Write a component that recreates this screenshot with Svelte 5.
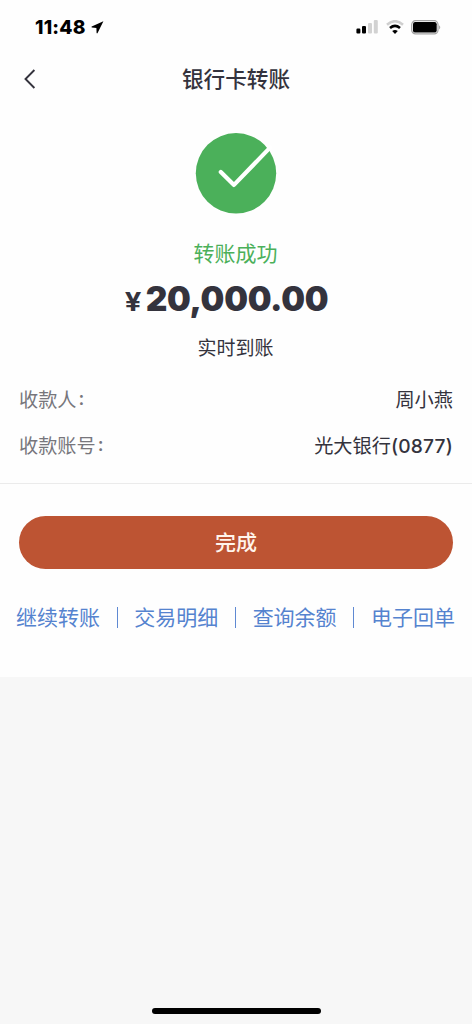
<script lang="ts">
    let payee = "周小燕";
    let bank = "光大银行";
    let cardTail = "(0877)";
    let amount = "20,000.00";

    const actions = ["继续转账", "交易明细", "查询余额", "电子回单"];
</script>

<div class="screen">
    <div class="panel">
        <div class="status-bar">
            <div class="clock">
                <span>11:48</span>
                <svg width="13" height="13" viewBox="0 0 13 13">
                    <path d="M12.4 0.3 L0.7 5.6 Q0.1 6.2 0.9 6.5 L5.4 7.1 L5.6 12 Q6 12.8 6.6 12 Z" />
                </svg>
            </div>
            <div class="indicators">
                <svg width="22" height="14" viewBox="0 0 22 14">
                    <rect x="0.4" y="8.6" width="4" height="5" rx="1.1" />
                    <rect x="6" y="6" width="4" height="7.6" rx="1.1" />
                    <rect class="dim" x="12" y="3" width="4" height="10.6" rx="1.1" />
                    <rect class="dim" x="17.8" y="0" width="4" height="13.6" rx="1.1" />
                </svg>
                <svg class="wifi" width="18" height="14" viewBox="0 0 18 14">
                    <path class="arc dim-arc" d="M1 4.7 Q9 -2.2 17 4.7" />
                    <path class="arc" d="M4 8 Q9 3.8 14 8" />
                    <path d="M9 14 L6.2 11.1 Q9 8.7 11.8 11.1 Z" />
                </svg>
                <svg class="battery" width="31" height="15" viewBox="0 0 31 15">
                    <rect class="shell" x="0.7" y="0.7" width="26.3" height="13.2" rx="3.8" />
                    <rect x="2" y="2" width="23.7" height="10.6" rx="2.2" />
                    <path class="tip" d="M28.1 5.2 Q30.4 7.3 28.1 9.4 Z" />
                </svg>
            </div>
        </div>

        <header class="nav">
            <button class="back" aria-label="返回">
                <svg width="12" height="20" viewBox="0 0 12 20">
                    <path d="M10.4 1 L1.5 10 L10.4 19" />
                </svg>
            </button>
            <h1>银行卡转账</h1>
        </header>

        <section class="result">
            <svg width="82" height="81" viewBox="0 0 82 81">
                <circle cx="41" cy="40.3" r="40.2" />
                <path d="M25.8 38.9 L39 51.9 L75 14.6" />
            </svg>
            <p class="result-text">转账成功</p>
            <p class="amount"><span class="currency">¥</span>{amount}</p>
            <p class="timing">实时到账</p>
        </section>

        <section class="details">
            <div class="row">
                <span class="label">收款人<i>:</i></span>
                <span>{payee}</span>
            </div>
            <div class="row">
                <span class="label">收款账号<i>:</i></span>
                <span>{bank}<b>{cardTail}</b></span>
            </div>
        </section>

        <button class="done-btn">完成</button>

        <nav class="actions">
            {#each actions as action, i}
                {#if i > 0}
                    <span class="separator"></span>
                {/if}
                <a href="#{i}">{action}</a>
            {/each}
        </nav>
    </div>

    <div class="home-bar"></div>
</div>

<style>
    :global(body) {
        margin: 0;
    }

    .screen {
        box-sizing: border-box;
        height: 1024px;
        padding-bottom: 10px;
        display: flex;
        flex-direction: column;
        justify-content: space-between;
        align-items: center;
        background: #f7f7f7;
        color: #34333d;
        font-family: Inter, "Noto Sans CJK SC", sans-serif;
    }

    .panel {
        box-sizing: border-box;
        width: 100%;
        height: 677px;
        background: #fefefe;
    }

    svg {
        display: block;
    }

    p, h1 {
        margin: 0;
    }

    button {
        border: none;
        padding: 0;
        font-family: inherit;
        cursor: pointer;
    }

    .status-bar {
        height: 54px;
        box-sizing: border-box;
        padding: 0 30px 0 35px;
        display: flex;
        justify-content: space-between;
        align-items: center;
        color: #000;
    }

    .clock {
        display: flex;
        align-items: center;
        gap: 5px;
        font-size: 19.2px;
        font-weight: 800;
        letter-spacing: 0.2px;
    }

    .indicators {
        display: flex;
        align-items: center;
    }

    .wifi {
        margin: 0 7px 0 8px;
    }

    .dim {
        fill: #d2d2d2;
    }

    .arc {
        fill: none;
        stroke: #000;
        stroke-width: 2.6;
    }

    .dim-arc {
        stroke: #cfcfcf;
    }

    .shell {
        fill: none;
        stroke: #a2a2a2;
        stroke-width: 1.2;
    }

    .tip {
        fill: #a2a2a2;
    }

    .nav {
        height: 50px;
        display: grid;
        grid-template-columns: 60px 1fr 60px;
        align-items: center;
    }

    .back {
        width: 60px;
        height: 50px;
        padding-left: 24px;
        background: none;
    }

    .back path {
        fill: none;
        stroke: #34333d;
        stroke-width: 1.9;
    }

    h1 {
        text-align: center;
        font-size: 21.6px;
        line-height: 50px;
        font-weight: 500;
    }

    .result {
        padding-top: 29px;
        display: flex;
        flex-direction: column;
        align-items: center;
    }

    .result circle {
        fill: #4bb05a;
    }

    .result path {
        fill: none;
        stroke: #fff;
        stroke-width: 4.2;
        stroke-linecap: round;
        stroke-linejoin: round;
    }

    .result-text {
        margin-top: 25px;
        padding-right: 1px;
        font-size: 21px;
        line-height: 30px;
        color: #4bb05a;
    }

    .amount {
        padding-right: 18px;
        font-size: 33.5px;
        line-height: 60px;
        font-weight: 900;
        letter-spacing: -0.3px;
    }

    .currency {
        display: inline-block;
        margin-right: 6px;
        font-size: 25px;
        line-height: 1;
        font-weight: 700;
        transform: scaleX(1.17);
    }

    .timing {
        padding-right: 1px;
        font-size: 19px;
        line-height: 40px;
    }

    .details {
        padding: 8px 19px 14px;
        border-bottom: 1px solid #ebebeb;
    }

    .row {
        display: flex;
        justify-content: space-between;
        font-size: 19.2px;
        line-height: 46px;
    }

    .row b {
        font-weight: 500;
        letter-spacing: 0.2px;
    }

    .label {
        color: #77767c;
    }

    .label i {
        position: relative;
        top: -2px;
        margin-left: 2px;
        font-style: normal;
        font-weight: 500;
    }

    .done-btn {
        display: block;
        width: 434px;
        height: 53px;
        margin: 32px auto 0;
        padding-bottom: 4px;
        border-radius: 27px;
        background: #bd5433;
        color: #fff5ec;
        font-size: 21px;
        font-weight: 500;
    }

    .actions {
        padding: 33px 17px 0 16px;
        display: flex;
        justify-content: space-between;
        align-items: center;
        line-height: 31px;
    }

    .actions a {
        color: #5583cf;
        font-size: 21px;
        text-decoration: none;
    }

    .separator {
        width: 1px;
        height: 21px;
        background: #5f89d2;
    }

    .home-bar {
        width: 169px;
        height: 6.5px;
        border-radius: 4px;
        background: #000;
    }
</style>
